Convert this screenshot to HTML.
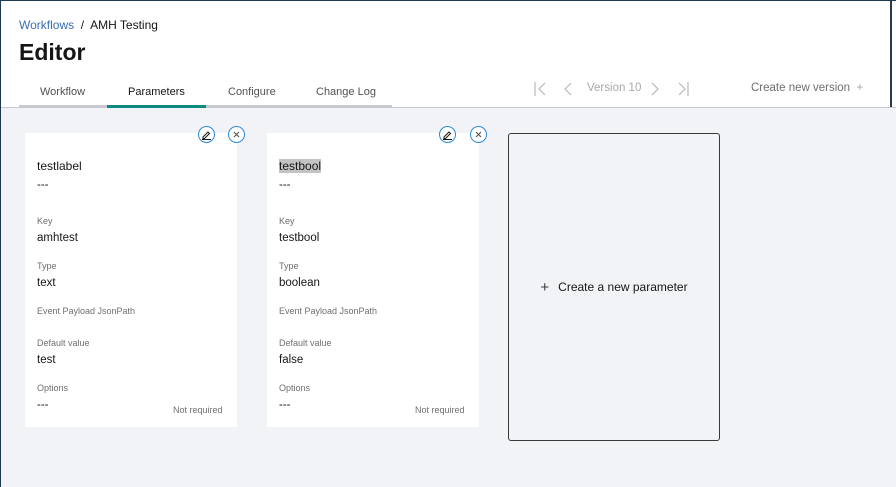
<!DOCTYPE html><html><head><style>
*{margin:0;padding:0;box-sizing:border-box}
body{width:896px;height:487px;overflow:hidden;font-family:"Liberation Sans",sans-serif;background:#f2f3f6;position:relative;color:#161616}
.frame{position:absolute;left:0;top:0;width:896px;height:487px;border-left:1px solid #1f3a4f;border-top:1px solid #1f3a4f;pointer-events:none}
.hdr{position:absolute;left:0;top:0;width:896px;height:108px;background:#fff;border-bottom:1px solid #c6c9d0}
.a{position:absolute;white-space:nowrap}
.card{position:absolute;top:133px;width:212px;height:294px;background:#fff}
.lbl{position:absolute;left:12px;font-size:9px;color:#6f6f6f}
.val{position:absolute;left:12px;font-size:11.5px;color:#161616}
.ic{position:absolute;top:126px;width:17px;height:17px;border:1px solid #2d8ad8;border-radius:50%;background:#fff;display:flex;align-items:center;justify-content:center}
</style></head><body>
<div class="hdr"></div>
<div class="a" style="left:890px;top:0;width:2px;height:107px;background:#2a3a48"></div>
<div class="a" style="left:19px;top:18px;font-size:12px;color:#0f62fe"><span style="color:#3a6fb0">Workflows</span> <span style="color:#161616">&nbsp;/&nbsp; AMH Testing</span></div>
<div class="a" style="left:19px;top:39px;font-size:23px;font-weight:bold">Editor</div>
<div class="a" style="left:19px;top:105px;width:373px;height:3px;background:#c6c9d0"></div>
<div class="a" style="left:107px;top:105px;width:99px;height:3px;background:#0f8a83"></div>
<div class="a" style="left:40px;top:86px;font-size:11px;color:#525252">Workflow</div>
<div class="a" style="left:128px;top:86px;font-size:11px;color:#161616">Parameters</div>
<div class="a" style="left:228px;top:86px;font-size:11px;color:#525252">Configure</div>
<div class="a" style="left:316px;top:86px;font-size:11px;color:#525252">Change Log</div>
<svg class="a" style="left:530px;top:80px" width="170" height="18" fill="none" stroke="#b8b8b8" stroke-width="1.2">
<path d="M5 2v14M15 3l-6 6 6 6M41 3l-6 6 6 6M122 3l6 6-6 6M149 3l6 6-6 6M158 2v14"/></svg>
<div class="a" style="left:587px;top:82px;font-size:11.5px;color:#a8a8a8">Version 10</div>
<div class="a" style="left:751px;top:82px;font-size:11.5px;color:#6f6f6f">Create new version &nbsp;<span style="color:#a8a8a8">+</span></div>

<div class="card" style="left:25px">
<div class="val" style="top:26px;font-size:12px">testlabel</div>
<div class="val" style="top:46px">---</div>
<div class="lbl" style="top:83px">Key</div><div class="val" style="top:99px">amhtest</div>
<div class="lbl" style="top:128px">Type</div><div class="val" style="top:144px">text</div>
<div class="lbl" style="top:173px">Event Payload JsonPath</div>
<div class="lbl" style="top:205px">Default value</div><div class="val" style="top:221px">test</div>
<div class="lbl" style="top:250px">Options</div><div class="val" style="top:266px">---</div>
<div class="lbl" style="top:272px;left:148px">Not required</div>
</div>
<div class="card" style="left:267px">
<div class="val" style="top:26px;font-size:12px;background:#c3c3c3">testbool</div>
<div class="val" style="top:46px">---</div>
<div class="lbl" style="top:83px">Key</div><div class="val" style="top:99px">testbool</div>
<div class="lbl" style="top:128px">Type</div><div class="val" style="top:144px">boolean</div>
<div class="lbl" style="top:173px">Event Payload JsonPath</div>
<div class="lbl" style="top:205px">Default value</div><div class="val" style="top:221px">false</div>
<div class="lbl" style="top:250px">Options</div><div class="val" style="top:266px">---</div>
<div class="lbl" style="top:272px;left:148px">Not required</div>
</div>
<div class="ic" style="left:198px"><svg width="11" height="11" fill="none" stroke="#161616" stroke-width="1"><path d="M2 8l5-5 1.5 1.5-5 5H2zM1 10.5h9"/></svg></div>
<div class="ic" style="left:228px"><svg width="9" height="9" stroke="#555" stroke-width="1.1"><path d="M2 2l5 5M7 2l-5 5"/></svg></div>
<div class="ic" style="left:439px"><svg width="11" height="11" fill="none" stroke="#161616" stroke-width="1"><path d="M2 8l5-5 1.5 1.5-5 5H2zM1 10.5h9"/></svg></div>
<div class="ic" style="left:470px"><svg width="9" height="9" stroke="#555" stroke-width="1.1"><path d="M2 2l5 5M7 2l-5 5"/></svg></div>

<div class="a" style="left:508px;top:133px;width:212px;height:308px;border:1px solid #393939;border-radius:3px;display:flex;align-items:center;justify-content:center;font-size:12px;color:#161616">
<span style="font-size:15px;margin-right:9px;color:#393939">+</span>Create a new parameter</div>
<div class="frame"></div>
</body></html>
